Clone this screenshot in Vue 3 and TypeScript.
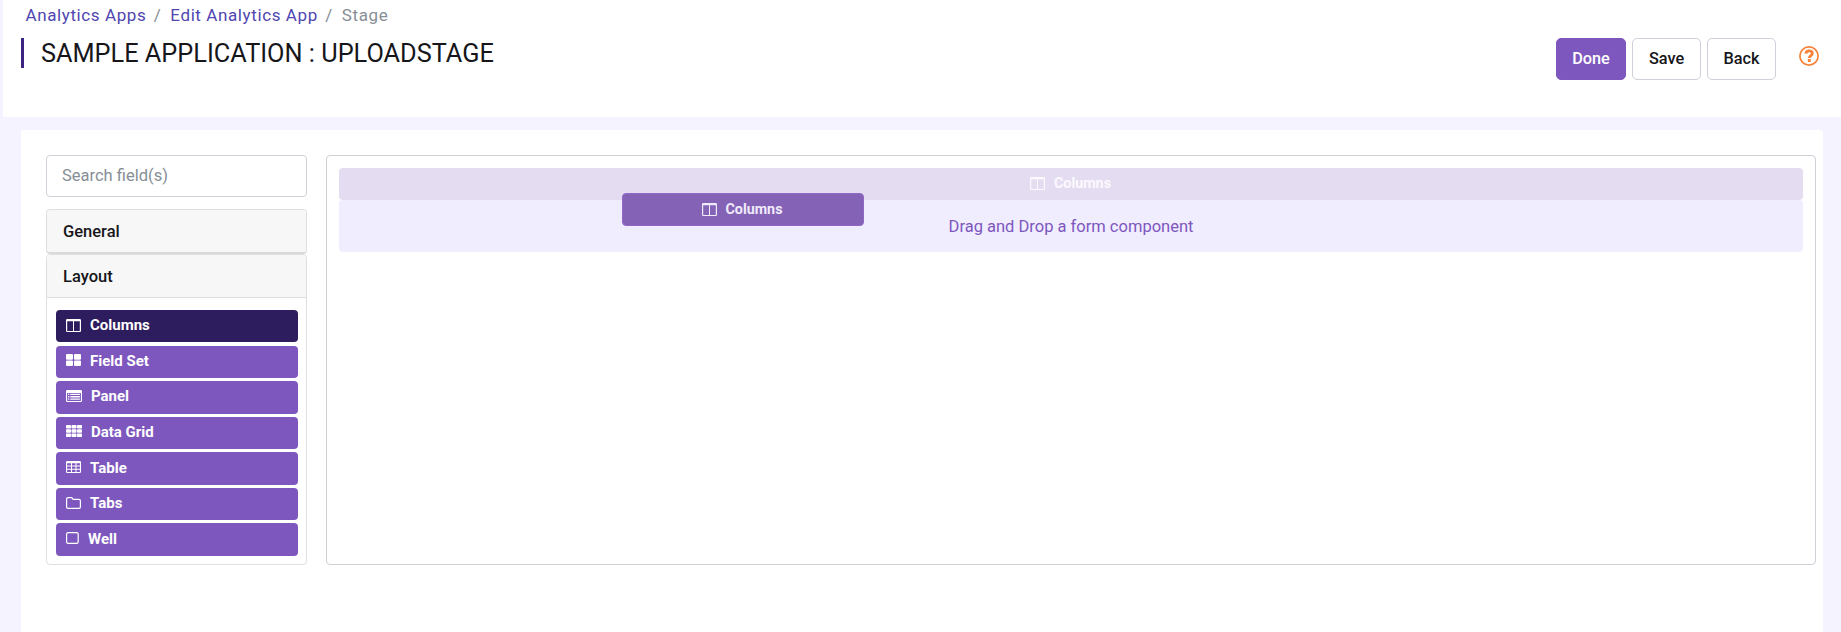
<script setup lang="ts">
import { h, type FunctionalComponent } from 'vue'

interface Field {
  label: string
  icon: string
  width: number
  active?: boolean
}

const fields: Field[] = [
  { label: 'Columns', icon: 'columns', width: 15, active: true },
  { label: 'Field Set', icon: 'th-large', width: 15 },
  { label: 'Panel', icon: 'list-alt', width: 16 },
  { label: 'Data Grid', icon: 'th', width: 16 },
  { label: 'Table', icon: 'table', width: 15 },
  { label: 'Tabs', icon: 'folder', width: 15 },
  { label: 'Well', icon: 'square', width: 13 },
]

const glyphs: Record<string, string> = {
  columns:
    'M1.2 0h12.6A1.2 1.2 0 0 1 15 1.2v10.6a1.2 1.2 0 0 1-1.2 1.2H1.2A1.2 1.2 0 0 1 0 11.8V1.2A1.2 1.2 0 0 1 1.2 0zM1.2 2.2V12H7V2.2zM8 2.2V12h5.8V2.2z',
  'th-large':
    'M1 0h5a1 1 0 0 1 1 1v3.7a1 1 0 0 1-1 1H1a1 1 0 0 1-1-1V1a1 1 0 0 1 1-1zM9 0h5a1 1 0 0 1 1 1v3.7a1 1 0 0 1-1 1H9a1 1 0 0 1-1-1V1a1 1 0 0 1 1-1zM1 6.5h5a1 1 0 0 1 1 1V11a1 1 0 0 1-1 1H1a1 1 0 0 1-1-1V7.5a1 1 0 0 1 1-1zM9 6.5h5a1 1 0 0 1 1 1V11a1 1 0 0 1-1 1H9a1 1 0 0 1-1-1V7.5a1 1 0 0 1 1-1z',
  'list-alt':
    'M1.2 0h13.6A1.2 1.2 0 0 1 16 1.2v9.6a1.2 1.2 0 0 1-1.2 1.2H1.2A1.2 1.2 0 0 1 0 10.8V1.2A1.2 1.2 0 0 1 1.2 0zM1.1 3v8h13.800V3zM2.100 3.700h1.300v1.300H2.100zM4.300 3.700h9.600v1.300H4.300zM2.100 6.100h1.300v1.300H2.100zM4.300 6.100h9.600v1.300H4.300zM2.100 8.500h1.300v1.300H2.100zM4.300 8.500h9.600v1.300H4.300z',
  th: 'M.7 0h3.600q.7 0 .7.700v2q0 .7-.7.700H.7Q0 3.400 0 2.700v-2Q0 0 .7 0zM6.200 0h3.600q.7 0 .7.700v2q0 .7-.7.700H6.200q-.7 0-.7-.7v-2q0-.7.7-.7zM11.700 0h3.600q.7 0 .7.700v2q0 .7-.7.700h-3.600q-.7 0-.7-.7v-2q0-.7.7-.7zM.7 4.300h3.600q.7 0 .7.700v2q0 .7-.7.700H.7Q0 7.700 0 7V5q0-.7.7-.7zM6.200 4.300h3.600q.7 0 .7.700v2q0 .7-.7.700H6.200q-.7 0-.7-.7V5q0-.7.7-.7zM11.700 4.300h3.600q.7 0 .7.700v2q0 .7-.7.700h-3.600q-.7 0-.7-.7V5q0-.7.7-.7zM.7 8.600h3.600q.7 0 .7.700v2q0 .7-.7.700H.7q-.7 0-.7-.7v-2q0-.7.7-.7zM6.200 8.600h3.600q.7 0 .7.700v2q0 .7-.7.700H6.200q-.7 0-.7-.7v-2q0-.7.7-.7zM11.700 8.600h3.600q.7 0 .7.700v2q0 .7-.7.700h-3.600q-.7 0-.7-.7v-2q0-.7.7-.7z',
  table:
    'M1.2 0h12.6A1.2 1.2 0 0 1 15 1.2v9.600a1.200 1.200 0 0 1-1.200 1.200H1.200A1.200 1.200 0 0 1 0 10.800V1.200A1.200 1.200 0 0 1 1.200 0zM1.100 2.200V4.500H5V2.200zM6 2.200V4.500H9.500V2.200zM10.500 2.200V4.500H13.900V2.200zM1.100 5.500V7.700H5V5.500zM6 5.500V7.700H9.500V5.500zM10.500 5.500V7.700H13.900V5.500zM1.100 8.700V10.900H5V8.700zM6 8.700V10.900H9.500V8.700zM10.500 8.700V10.900H13.900V8.700z',
  folder:
    'M2 0h3.200a2 2 0 0 1 2 1.700H13a2 2 0 0 1 2 2V10a2 2 0 0 1-2 2H2a2 2 0 0 1-2-2V2a2 2 0 0 1 2-2zM2 1.200a.8.8 0 0 0-.8.800V10a.8.8 0 0 0 .8.800H13a.8.8 0 0 0 .8-.8V3.700a.8.8 0 0 0-.8-.8H6.900a.8.8 0 0 1-.8-.8.9.9 0 0 0-.9-.9z',
  square:
    'M2.200 0h8.400a2.200 2.200 0 0 1 2.200 2.200v7.600a2.200 2.200 0 0 1-2.200 2.200H2.200A2.200 2.200 0 0 1 0 9.800V2.200A2.200 2.200 0 0 1 2.200 0zM2.300 1.200a1.100 1.100 0 0 0-1.100 1.100v7.400a1.100 1.100 0 0 0 1.100 1.100h8.200a1.100 1.100 0 0 0 1.100-1.100V2.300a1.100 1.100 0 0 0-1.100-1.100z',
}

const Glyph: FunctionalComponent<{ name: string; width: number }> = (props) =>
  h(
    'svg',
    { width: props.width, height: 13, viewBox: `0 0 ${props.width} 13`, fill: 'currentColor', 'aria-hidden': 'true' },
    [h('path', { 'fill-rule': 'evenodd', d: glyphs[props.name] })],
  )
Glyph.props = ['name', 'width']
</script>

<template>
  <div class="page">
    <header class="header">
      <div class="heading">
        <nav class="crumbs">
          <a>Analytics Apps</a><span class="sep">/</span><a>Edit Analytics App</a><span class="sep">/</span><span>Stage</span>
        </nav>
        <h1>SAMPLE APPLICATION : UPLOADSTAGE</h1>
      </div>
      <div class="actions">
        <button class="btn primary">Done</button>
        <button class="btn">Save</button>
        <button class="btn">Back</button>
        <svg class="help" width="20" height="20" viewBox="0 0 20 20" fill="none" aria-label="Help">
          <circle cx="10" cy="10" r="9.1" stroke="#f9813a" stroke-width="1.7" />
          <path d="M6.800 7.600C7.100 5.600 8.400 4.900 10.100 4.900C12 4.900 13.300 6 13.300 7.500C13.300 9.700 10.300 9.600 10.300 12" stroke="#f9813a" stroke-width="2.800" />
          <rect x="8.800" y="13.100" width="3" height="2.800" rx=".4" fill="#f9813a" />
        </svg>
      </div>
    </header>

    <main class="card">
      <aside class="side">
        <input class="search" placeholder="Search field(s)" />
        <div class="group closed"><div class="group-title">General</div></div>
        <div class="group open">
          <div class="group-title">Layout</div>
          <div class="fields">
            <div v-for="f in fields" :key="f.label" class="field" :class="{ active: f.active }">
              <Glyph :name="f.icon" :width="f.width" />
              <span>{{ f.label }}</span>
            </div>
          </div>
        </div>
      </aside>
      <section class="canvas">
        <div class="ghost"><Glyph name="columns" :width="15" /><span>Columns</span></div>
        <div class="drop">Drag and Drop a form component</div>
        <div class="dragged"><Glyph name="columns" :width="15" /><span>Columns</span></div>
      </section>
    </main>
  </div>
</template>

<style>
body {
  margin: 0;
  overflow: hidden;
}
</style>

<style scoped>
.page {
  box-sizing: border-box;
  height: 632px;
  overflow: hidden;
  background: #f5f3ff;
  font-family: Roboto, 'Liberation Sans', sans-serif;
  font-size: 16px;
  color: #16161a;
}
.page * {
  box-sizing: border-box;
}
.header {
  display: flex;
  justify-content: space-between;
  height: 117px;
  margin-left: 3px;
  background: #fff;
}
.heading {
  padding-left: 18px;
}
.crumbs {
  display: flex;
  height: 30px;
  padding-left: 4.5px;
  font-size: 17px;
  line-height: 31px;
  letter-spacing: 0.6px;
  color: #868e96;
  white-space: nowrap;
}
.crumbs a {
  color: #4f46b0;
}
.sep {
  width: 24px;
  padding-left: 7.5px;
}
h1 {
  height: 30px;
  margin: 8px 0 0;
  padding-left: 17px;
  border-left: 3px solid #3c2483;
  font-size: 25.3px;
  font-weight: 400;
  line-height: 31px;
  white-space: nowrap;
}
.actions {
  display: flex;
  gap: 6px;
  padding: 38px 22px 0 0;
}
.btn {
  width: 69px;
  height: 42px;
  padding: 0;
  border: 1px solid #ced0da;
  border-radius: 5px;
  background: #fff;
  font: 500 16.3px/40px Roboto, sans-serif;
  color: #16161a;
}
.btn.primary {
  width: 70px;
  border-color: #7e57be;
  background: #7e57be;
  color: #fff;
}
.help {
  margin: 8px 0 0 17px;
}
.card {
  display: flex;
  align-items: flex-start;
  gap: 19px;
  height: 510px;
  margin: 13px 18px 0 21px;
  padding: 25px 7px 0 25px;
  border-radius: 3px;
  background: #fff;
}
.side {
  width: 261px;
}
.search {
  display: block;
  width: 261px;
  height: 42px;
  margin-bottom: 12px;
  padding: 0 15px 2px;
  border: 1px solid #ced4da;
  border-radius: 4px;
  outline: none;
  font: 400 16.5px Roboto, sans-serif;
}
.search::placeholder {
  color: #868e96;
  opacity: 1;
}
.group {
  border: 1px solid #dfdfdf;
  border-radius: 4px;
  overflow: hidden;
}
.closed {
  height: 45px;
  border-bottom: 2px solid #dadada;
}
.open {
  height: 311px;
}
.group-title {
  height: 43px;
  padding-left: 16px;
  background: #f7f7f7;
  font-size: 16.5px;
  font-weight: 500;
  line-height: 43px;
}
.open .group-title {
  border-bottom: 1px solid #dfdfdf;
}
.fields {
  display: grid;
  grid-template-rows: repeat(7, 32.4px);
  row-gap: 3.2px;
  padding: 12px 8px 0 9px;
}
.field {
  display: flex;
  align-items: center;
  gap: 9px;
  padding: 0 10px 2px;
  border-radius: 4px;
  background: #7e57be;
  font-size: 15px;
  font-weight: 700;
  color: #fff;
}
.field.active {
  background: #2d1c5e;
}
.canvas {
  position: relative;
  flex: 1;
  height: 410px;
  padding: 12px;
  border: 1px solid #ced0d6;
  border-radius: 4px;
}
.ghost {
  display: flex;
  align-items: center;
  justify-content: center;
  gap: 9px;
  height: 32px;
  padding: 0 1px 2px 0;
  border-radius: 4px;
  background: #e4dcf1;
  font-size: 14.3px;
  font-weight: 700;
  color: #fbf9fe;
}
.drop {
  height: 52px;
  border-radius: 4px;
  background: #f0edff;
  font-size: 16.5px;
  line-height: 53px;
  text-align: center;
  color: #7e57be;
}
.dragged {
  position: absolute;
  left: 295px;
  top: 37px;
  display: flex;
  align-items: center;
  justify-content: center;
  gap: 9px;
  width: 242px;
  height: 33px;
  padding: 0 2px 1px 0;
  border: 1px solid #9168c6;
  border-radius: 4px;
  background: #8462b6;
  font-size: 14.3px;
  font-weight: 700;
  color: #f0ebfa;
}
</style>
